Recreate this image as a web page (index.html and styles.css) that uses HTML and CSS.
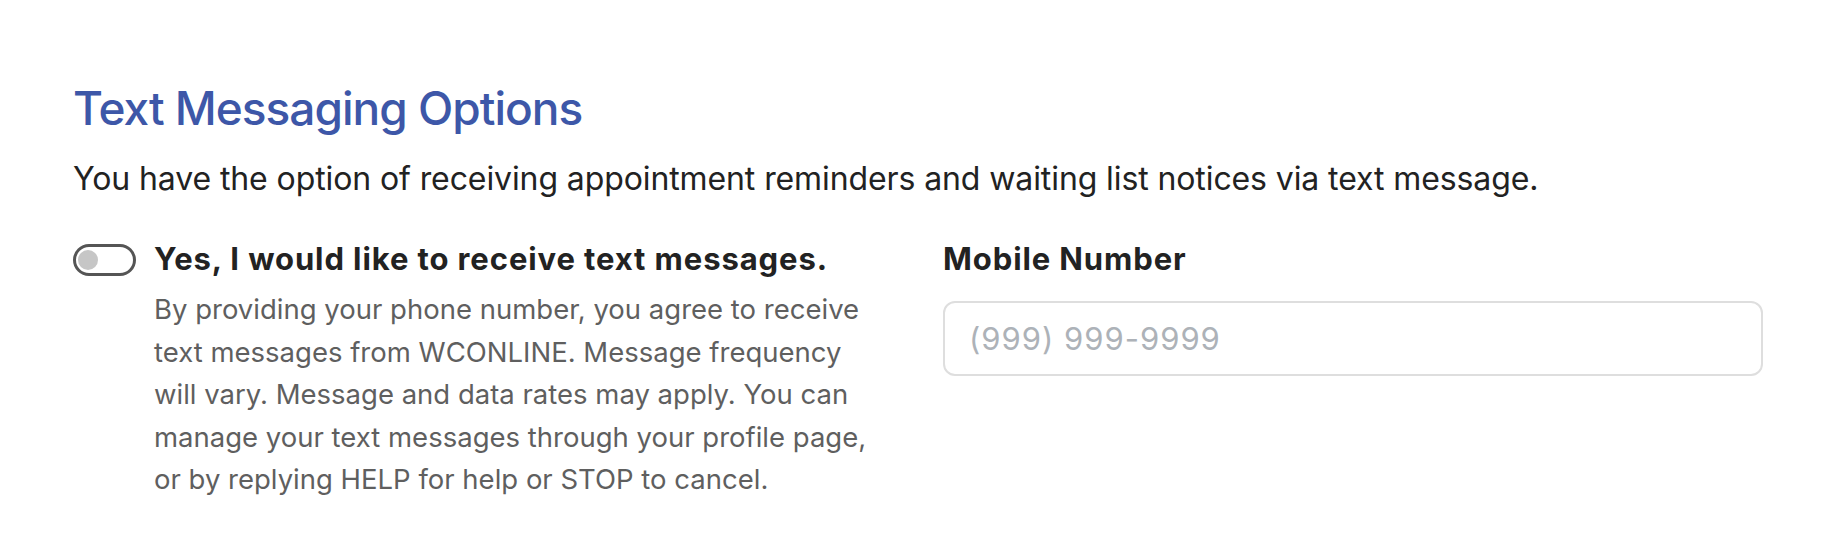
FILE: index.html
```html
<!DOCTYPE html>
<html lang="en">
<head>
<meta charset="utf-8">
<title>Text Messaging Options</title>
<link rel="stylesheet" href="styles.css">
</head>
<body>
<section class="sms">
  <h1 class="sms-title">Text Messaging Options</h1>
  <p class="sms-intro">You have the option of receiving appointment reminders and waiting list notices via text message.</p>
  <div class="sms-grid">
    <div class="opt">
      <span class="toggle" role="switch" aria-checked="false"><span class="knob"></span></span>
      <div class="opt-text">
        <div class="opt-label">Yes, I would like to receive text messages.</div>
        <p class="opt-desc">By providing your phone number, you agree to receive text messages from WCONLINE. Message frequency will vary. Message and data rates may apply. You can manage your text messages through your profile page, or by replying HELP for help or STOP to cancel.</p>
      </div>
    </div>
    <div class="field">
      <label class="field-label" for="mobile">Mobile Number</label>
      <input class="field-input" id="mobile" type="text" placeholder="(999) 999-9999">
    </div>
  </div>
</section>
</body>
</html>
```
FILE: styles.css
```css
html, body {
  margin: 0;
  padding: 0;
  background: #ffffff;
}
body {
  font-family: Inter, "Noto Sans", "Liberation Sans", sans-serif;
  color: #222222;
}
.sms {
  padding: 80px 73px 0 73px;
}
.sms-title {
  margin: 0;
  font-size: 46px;
  line-height: 56px;
  font-weight: 500;
  color: #3d57a8;
  letter-spacing: -1px;
}
.sms-intro {
  margin: 21px 0 0 0;
  font-size: 32px;
  line-height: 44px;
  letter-spacing: -0.1px;
  color: #222222;
}
.sms-grid {
  margin-top: 38px;
  display: grid;
  grid-template-columns: 820px 820px;
  column-gap: 50px;
}
.opt {
  display: flex;
  align-items: flex-start;
  gap: 18px;
}
.toggle {
  flex: none;
  box-sizing: border-box;
  width: 63px;
  height: 32px;
  margin-top: 5px;
  border: 3px solid #555555;
  border-radius: 16px;
  padding: 0 2px;
  display: flex;
  align-items: center;
}
.knob {
  width: 20px;
  height: 20px;
  border-radius: 50%;
  background: #c6c6c6;
}
.opt-text {
  flex: 1;
  max-width: 730px;
}
.opt-label,
.field-label {
  display: block;
  font-size: 31px;
  line-height: 40px;
  font-weight: 700;
  letter-spacing: 0.9px;
  color: #222222;
  white-space: nowrap;
}
.opt-desc {
  margin: 9px 0 0 0;
  font-size: 27.5px;
  line-height: 42.5px;
  color: #5f5f5f;
}
.field {
  display: flex;
  flex-direction: column;
}
.field-input {
  margin-top: 22px;
  box-sizing: border-box;
  width: 820px;
  height: 75px;
  border: 2px solid #dedede;
  border-radius: 12px;
  padding: 0 24px;
  font-family: Inter, "Noto Sans", "Liberation Sans", sans-serif;
  font-size: 31px;
  letter-spacing: 1px;
  color: #222222;
  background: #ffffff;
  outline: none;
}
.field-input::placeholder {
  color: #adb2b8;
}
```
